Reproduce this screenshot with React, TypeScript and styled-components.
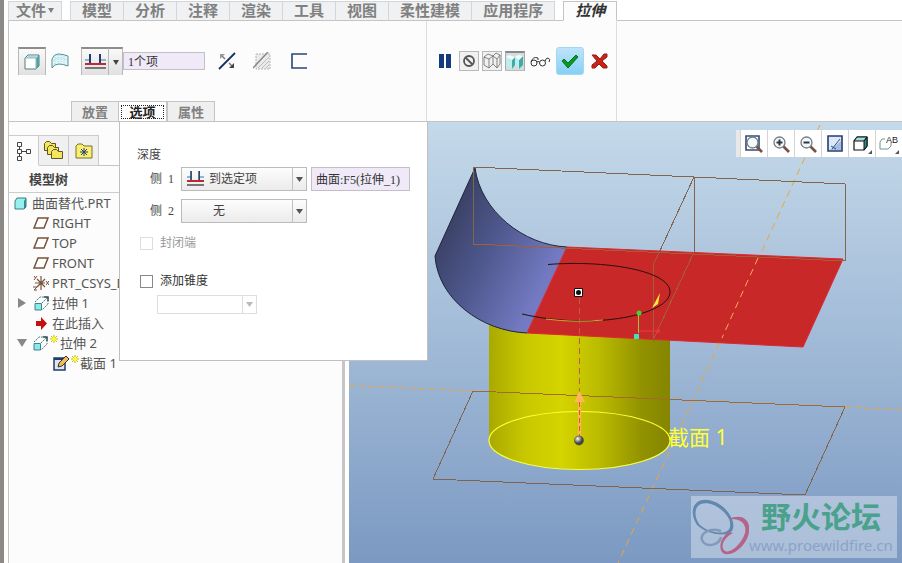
import React from "react";
import styled, { createGlobalStyle } from "styled-components";

const GlobalStyle = createGlobalStyle`
  *, *::before, *::after { box-sizing: border-box; }
  html, body { margin: 0; padding: 0; }
  body {
    background: #fff;
    color: #444;
    font: 12px/16px "Liberation Serif", "Noto Sans CJK SC", sans-serif;
  }
  button, input, select { font: inherit; color: inherit; margin: 0; }
  svg { display: block; flex: none; }
`;

const line = "#c4c4c4";
const uiFont = `"Noto Sans", "Noto Sans CJK SC", sans-serif`;

const Window = styled.div`
  display: flex;
  flex-direction: column;
  min-height: 100vh;
  padding-left: 4px;
  border-left: 4px solid #8d8986;
  overflow: hidden;
`;

const MenuBar = styled.nav`
  display: flex;
  height: 21px;
  padding-top: 1px;
`;

const MenuGap = styled.div`
  width: 8px;
  border-bottom: 1px solid ${line};
`;

const MenuFill = styled.div`
  flex: 1;
  border-bottom: 1px solid ${line};
`;

const MenuTab = styled.button<{ $active?: boolean; $first?: boolean }>`
  display: flex;
  align-items: center;
  justify-content: center;
  gap: 2px;
  padding: 0 11px 2px;
  border: 1px solid ${(p) => (p.$active ? line : "#d2d6da")};
  border-left-width: ${(p) => (p.$active || p.$first ? 1 : 0)}px;
  border-bottom-color: ${(p) => (p.$active ? "#fcfcfc" : line)};
  background: ${(p) => (p.$active ? "#fcfcfc" : "#f0f1f2")};
  color: ${(p) => (p.$active ? "#333" : "#808080")};
  font: ${(p) => (p.$active ? "italic" : "normal")} bold 15px/16px "Noto Sans CJK SC", sans-serif;
  white-space: nowrap;
`;

const FileTab = styled(MenuTab)`
  padding: 0 7px 2px;
`;

const Ribbon = styled.header`
  display: flex;
  height: 101px;
  background: #fcfcfc;
  border-left: 1px solid ${line};
  border-bottom: 1px solid ${line};
`;

const RibbonMain = styled.div`
  display: flex;
  flex-direction: column;
  justify-content: space-between;
  width: 418px;
  border-right: 1px solid #ddd;
`;

const RibbonActions = styled.div`
  width: 190px;
  padding: 26px 0 0 9px;
  border-right: 1px solid #ddd;
`;

const ToolRow = styled.div`
  display: flex;
  align-items: center;
  height: 28px;
`;

const MainTools = styled(ToolRow)`
  margin: 26px 0 0 9px;
`;

const IconButton = styled.button<{ $w?: number; $look?: "raised" | "ok" | "box" | "pressed" }>`
  display: flex;
  align-items: center;
  justify-content: center;
  flex: none;
  width: ${(p) => p.$w ?? 28}px;
  height: ${(p) => (p.$look === "box" || p.$look === "pressed" ? 20 : 28)}px;
  padding: 0;
  border: 0 solid #b8b8b8;
  background: transparent;
  ${(p) =>
    p.$look === "raised" &&
    `border-width: 2px 1px 0; border-top-color: #8c8c8c; background: linear-gradient(#fafafa, #e0e0e0);`}
  ${(p) =>
    p.$look === "ok" &&
    `border: 1px solid #a4d8ee; border-radius: 3px; background: linear-gradient(#bfe4fb, #86d0f6);`}
  ${(p) => p.$look === "box" && `border-width: 1px; background: #f1f1f1;`}
  ${(p) => p.$look === "pressed" && `border-width: 2px 1px 1px; border-color: #888 #aaa #bbb; background: #d6dcdc;`}
`;

const DropButton = styled(IconButton)`
  border-left: 0;
`;

const Spacer = styled.div<{ $w: number }>`
  flex: none;
  width: ${(p) => p.$w}px;
`;

const Field = styled.input`
  width: 82px;
  height: 18px;
  padding: 0 4px;
  border: 1px solid #c2bfc6;
  background: #f0eaf8;
  color: #333;
`;

const ReferenceField = styled(Field)`
  width: 99px;
  height: 24px;
  margin-left: 4px;
`;

const SubTabs = styled.div`
  display: flex;
  height: 20px;
  margin-left: 62px;
`;

const SubTab = styled.button<{ $active?: boolean }>`
  display: flex;
  align-items: center;
  justify-content: center;
  width: 48px;
  padding: 0 2px;
  border: 1px solid ${line};
  border-width: 1px 1px 0 ${(p) => (p.$active ? 0 : 1)}px;
  background: ${(p) => (p.$active ? "#fff" : "#efefef")};
  color: ${(p) => (p.$active ? "#222" : "#808080")};
  font: bold 13px/14px "Noto Sans CJK SC", sans-serif;
`;

const Focus = styled.span`
  flex: 1;
  outline: 1px dotted #222;
  outline-offset: -1px;
`;

const Workspace = styled.div`
  position: relative;
  display: flex;
  flex: 1;
`;

const Sidebar = styled.aside`
  display: flex;
  flex-direction: column;
  width: 337px;
  margin-right: 4px;
  padding-top: 13px;
  border-left: 1px solid ${line};
  border-right: 3px solid #c6c6c6;
  background: #fcfcfc;
`;

const PanelTabs = styled.div`
  display: flex;
  height: 31px;
`;

const PanelTab = styled.button<{ $active?: boolean }>`
  display: flex;
  align-items: center;
  justify-content: center;
  width: 30px;
  padding: 0;
  border: 1px solid #ccc;
  border-left: 0;
  border-bottom-color: ${(p) => (p.$active ? "#fcfcfc" : "#ccc")};
  background: ${(p) => (p.$active ? "#fcfcfc" : "#f0f0f0")};
`;

const TreeTitle = styled.h2`
  margin: 0;
  padding: 3px 20px 3px;
  border-bottom: 1px solid #ccc;
  font: bold 13px/20px ${uiFont};
`;

const Tree = styled.ul`
  margin: 0;
  padding: 0;
  list-style: none;
`;

const TreeRow = styled.li<{ $pad: number; $gap?: number }>`
  display: flex;
  align-items: center;
  gap: ${(p) => p.$gap ?? 3}px;
  height: 20px;
  padding-left: ${(p) => p.$pad}px;
  color: #555;
  font: 13px/20px ${uiFont};
  white-space: nowrap;
`;

const Expander = styled.button`
  display: flex;
  width: 14px;
  padding: 0;
  border: 0;
  background: none;
`;

const Marker = styled.span`
  align-self: flex-start;
  padding-top: 2px;
`;

const OptionsPanel = styled.section`
  position: absolute;
  z-index: 2;
  top: 0;
  left: 111px;
  width: 309px;
  padding: 25px 16px 46px 17px;
  border: 1px solid #c0c0c0;
  border-top: 0;
  background: #fff;
`;

const PanelHeading = styled.h3`
  margin: 0 0 4px;
  font: inherit;
`;

const SideRow = styled.div`
  display: flex;
  align-items: center;
  height: 24px;
  margin-bottom: 8px;
`;

const SideLabel = styled.label`
  width: 31px;
  margin-left: 13px;
  white-space: pre;
`;

const SelectBox = styled.div<{ $off?: boolean }>`
  display: flex;
  align-items: center;
  width: ${(p) => (p.$off ? 100 : 126)}px;
  height: ${(p) => (p.$off ? 19 : 24)}px;
  border: 1px solid ${(p) => (p.$off ? "#ddd" : "#bbb")};
  background: ${(p) => (p.$off ? "#fff" : "linear-gradient(#fdfdfd, #ebebeb)")};
`;

const TaperBox = styled(SelectBox)`
  margin-left: 20px;
`;

const SelectIcon = styled.span<{ $empty?: boolean }>`
  flex: none;
  width: ${(p) => (p.$empty ? 31 : 27)}px;
  padding-left: 5px;
`;

const Select = styled.select`
  flex: 1;
  min-width: 0;
  height: 100%;
  padding: 0;
  border: 0;
  appearance: none;
  background: transparent;
`;

const Arrow = styled.span<{ $off?: boolean }>`
  display: flex;
  align-items: center;
  justify-content: center;
  width: 14px;
  height: 100%;
  border-left: 1px solid ${(p) => (p.$off ? "#ddd" : "#c0c0c0")};
  color: ${(p) => (p.$off ? "#bbb" : "#555")};
  pointer-events: none;
`;

const Checks = styled.div`
  display: flex;
  flex-direction: column;
  gap: 22px;
  padding: 4px 0 6px 3px;
`;

const CheckLine = styled.label<{ $off?: boolean }>`
  display: flex;
  align-items: center;
  gap: 7px;
  height: 16px;
  color: ${(p) => (p.$off ? "#999" : "#333")};
`;

const Check = styled.input`
  width: 13px;
  height: 13px;
  border: 1px solid #888;
  appearance: none;
  background: #fff;
  &:checked { background: #567; }
  &:disabled { border-color: #ddd; }
`;

const Viewport = styled.main`
  position: relative;
  flex: 1;
  min-width: 0;
  min-height: 441px;
  background: linear-gradient(#c4d9e9, #a0b9d6 51%, #7b99c2);
`;

const Scene = styled.svg`
  width: 100%;
  height: auto;
`;

const ViewTools = styled.div`
  position: absolute;
  top: 8px;
  right: 0;
  display: flex;
  height: 27px;
  padding-left: 4px;
  background: #e8e8e8;
`;

const ViewTool = styled.button`
  display: flex;
  align-items: center;
  justify-content: center;
  width: 27px;
  padding: 0;
  border: 0;
  border-left: 1px solid #d4d4d4;
  background: #fff;
`;

const Watermark = styled.div`
  position: absolute;
  right: 5px;
  bottom: 5px;
  display: flex;
  width: 206px;
  height: 62px;
  background: rgba(220, 227, 240, 0.5);
`;

const WatermarkText = styled.div`
  display: flex;
  flex-direction: column;
  align-items: center;
  white-space: nowrap;
`;

const SiteName = styled.span`
  color: #4aa18c;
  font: bold 30px/38px "Noto Sans CJK SC", sans-serif;
`;

const Site = styled.a`
  color: #8ba2c8;
  font: 15px/22px "Noto Sans", sans-serif;
  text-decoration: none;
`;

const Caret = ({ size = 7 }: { size?: number }) => (
  <svg width={size} height="5" viewBox="0 0 8 5" preserveAspectRatio="none">
    <path d="M0 0H8L4 5Z" fill="currentColor" />
  </svg>
);

const SolidIcon = () => (
  <svg width="18" height="18" viewBox="0 0 18 18">
    <path d="M2 5 5 2H16V13L13 16H2Z" fill="#fff" stroke="#557d80" />
    <path d="M13 5 16 2V13L13 16Z" fill="#4fa3a3" />
    <path d="M3 5 5 3H15L13 5Z" fill="#a9dcdc" />
    <path d="M2 5H13V16" fill="none" stroke="#8fb9ba" />
  </svg>
);

const SurfaceIcon = () => (
  <svg width="18" height="18" viewBox="0 0 18 18">
    <path d="M1 16V7Q3 2 7 2Q12 2 17 4V14Q12 12 8 12Q3 12 1 16Z" fill="#e0f5f7" stroke="#578f94" />
    <path d="M4 5V12M7 3V11M10 3V11M13 4V12M2 9Q5 6 9 6Q12 6 16 8" stroke="#a3dadd" fill="none" strokeDasharray="1 1" />
  </svg>
);

const ToSelectedIcon = ({ width = 21 }: { width?: number }) => (
  <svg width={width} height="18" viewBox="0 0 21 18" preserveAspectRatio="none">
    <path d="M0 7H5M16 7H21" stroke="#8db8cb" strokeWidth="2" />
    <path d="M0 11H21" stroke="#bd2a34" strokeWidth="2" />
    <path d="M5 1V10M15 1V10" stroke="#233a6c" strokeWidth="2" />
    <path d="M0 15H21" stroke="#777" strokeWidth="2" />
  </svg>
);

const FlipIcon = () => (
  <svg width="18" height="18" viewBox="0 0 18 18">
    <path d="M1 17 17 1" stroke="#14305c" strokeWidth="1.8" />
    <path d="M3 3 7 7M11 11 15 15" stroke="#777" strokeWidth="1.5" />
    <path d="M2 2H7L2 7Z" fill="#999" />
    <path d="M16 16H11L16 11Z" fill="#444" />
  </svg>
);

const RemoveIcon = () => (
  <svg width="18" height="18" viewBox="0 0 18 18">
    <path d="M3 2H17V17H3Z" fill="#ebebeb" stroke="#b5b5b5" strokeDasharray="2 1" />
    <path d="M5 16 16 5M9 16 16 9M13 16 16 13" stroke="#bbb" />
    <path d="M0 16 15 0" stroke="#888" strokeWidth="1.5" />
  </svg>
);

const ThickenIcon = () => (
  <svg width="16" height="16" viewBox="0 0 16 16">
    <path d="M16 1H1V15H16" fill="none" stroke="#25467a" strokeWidth="1.6" />
  </svg>
);

const PauseIcon = () => (
  <svg width="13" height="14" viewBox="0 0 13 14">
    <path d="M0 0H5V14H0ZM7 0H12V14H7Z" fill="#163a7e" />
  </svg>
);

const NoneIcon = () => (
  <svg width="14" height="14" viewBox="0 0 14 14" fill="none" stroke="#555" strokeWidth="1.8">
    <circle cx="7" cy="7" r="5" />
    <path d="M3.5 3.5 10.5 10.5" />
  </svg>
);

const WirePreviewIcon = () => (
  <svg width="18" height="18" viewBox="0 0 18 18" fill="none" stroke="#777">
    <path d="M1 5 6 7V16L1 13ZM1 5 5 2 10 4 6 7M6 16 10 12V4M10 12 14 16V7L10 4M14 7 17 3V12L14 16M10 4 13 1 17 3" strokeWidth=".9" />
  </svg>
);

const SolidPreviewIcon = () => (
  <svg width="18" height="17" viewBox="0 0 18 17">
    <path d="M0 4 6 7V16L0 13ZM9 4 13 7V16L9 12Z" fill="#bdeeee" />
    <path d="M6 7 9 4V12L6 16ZM13 7 17 3V12L13 16Z" fill="#42a9a9" />
    <path d="M0 4 3 2 9 4 6 7ZM9 4 12 2 17 3 13 7Z" fill="#eaffff" />
  </svg>
);

const GlassesIcon = () => (
  <svg width="21" height="14" viewBox="0 0 21 14" fill="none" stroke="#333">
    <circle cx="4" cy="9" r="3" />
    <circle cx="12.500" cy="9" r="3" />
    <path d="M7 8Q8 7 9.500 8M1 8Q3 2 8 4V6M15 7Q16 4 18 4Q21 5 19 8" />
  </svg>
);

const OkIcon = () => (
  <svg width="18" height="16" viewBox="0 0 18 16">
    <path d="M1 8 3 6 7 10 15 2 17 4 7 15Z" fill="#0b9a21" stroke="#08701a" />
  </svg>
);

const CancelIcon = () => (
  <svg width="17" height="16" viewBox="0 0 17 16">
    <path d="M1 2H5L9 6 13 1H16V4L11 8 16 13V15H12L8 11 4 15H1V12L6 8Z" fill="#c92318" stroke="#9c1b18" />
  </svg>
);

const TreeIcon = () => (
  <svg width="15" height="20" viewBox="0 0 15 20" fill="none" stroke="#444">
    <path d="M1.500 1.500h4v4h-4ZM1.500 8.500h4v4h-4ZM1.500 15.500h4v4h-4ZM10.500 8.500h4v4h-4ZM3.500 5.500v3M3.500 12.500v3M5.500 10.500h5" />
  </svg>
);

const folder = "M0.500 2.500 2.500 0.500H5.500L7.500 2.500H11.500V9.500H0.500Z";

const FoldersIcon = () => (
  <svg width="20" height="19" viewBox="0 0 20 19" fill="#f4e45e" stroke="#5d5622">
    <path d={folder} />
    <path d={folder} transform="translate(3 4)" />
    <path d={folder} transform="translate(7 8)" />
  </svg>
);

const FavoritesIcon = () => (
  <svg width="18" height="16" viewBox="0 0 18 16">
    <path d="M1 3 3 1H7L9 3H17V15H1Z" fill="#faf06c" stroke="#776f30" />
    <path d="M9 5V13M5 9H13M6 6 12 12M12 6 6 12" stroke="#233b7c" />
  </svg>
);

const PartIcon = () => (
  <svg width="13" height="13" viewBox="0 0 13 13">
    <path d="M1 4 3 1H12V10L10 12H1Z" fill="#96f0f0" stroke="#387c83" />
    <path d="M10 4 12 1V10L10 12Z" fill="#328a8d" />
  </svg>
);

const PlaneIcon = () => (
  <svg width="16" height="12" viewBox="0 0 16 12">
    <path d="M5 1H15L11 11H1Z" fill="#fff" stroke="#76513c" strokeWidth="1.5" />
  </svg>
);

const CsysIcon = () => (
  <svg width="16" height="16" viewBox="0 0 16 16" fill="none" stroke="#79513c">
    <path d="M8 8V1M8 8V15M2 8H12M4 4 12 12M4 12 12 4" strokeWidth="1.2" />
    <path d="M1 1 2.500 3M4 1 1 5M13 6 16 10M16 6 13 10M0 12H4L1 15H4" />
  </svg>
);

const ExtrudeIcon = () => (
  <svg width="15" height="15" viewBox="0 0 15 15">
    <path d="M1 7.500H7.500V14H1Z" fill="#89eaea" stroke="#438289" />
    <path d="M1 6 6 1H14V8L8 14M8 7 14 1" fill="none" stroke="#477" strokeDasharray="2 1" />
    <path d="M10 1H14V5" fill="none" stroke="#355" strokeWidth="1.5" />
  </svg>
);

const InsertIcon = () => (
  <svg width="13" height="13" viewBox="0 0 13 13">
    <path d="M0 4H5V0L11 6.500 5 13V9H0Z" fill="#c41010" />
  </svg>
);

const SketchIcon = () => (
  <svg width="17" height="16" viewBox="0 0 17 16">
    <path d="M1 3H12V15H1Z" fill="#dce7f0" stroke="#203b6b" strokeWidth="1.5" />
    <path d="M1 3H12V5H1Z" fill="#203b6b" />
    <path d="M5 12 6 8 13 1 16 4 9 11Z" fill="#f0bd56" stroke="#3b3028" />
  </svg>
);

const NewMark = () => (
  <svg width="8" height="8" viewBox="0 0 8 8" stroke="#c4b800">
    <path d="M4 0V8M0 4H8M1 1 7 7M7 1 1 7" />
    <circle cx="4" cy="4" r="2" fill="#ffff20" stroke="none" />
  </svg>
);

const ZoomIcon = ({ sign, framed }: { sign?: string; framed?: boolean }) => (
  <svg width="18" height="18" viewBox="0 0 18 18">
    {framed && <path d="M1 1H14V15H1Z" fill="#fff" stroke="#304c7a" strokeWidth="1.6" />}
    <path d="M11 11 17 17" stroke="#775046" strokeWidth="2.6" />
    <circle cx="7.500" cy="7.500" r="5.500" fill="#f5f8f9" stroke="#747c82" strokeWidth="1.3" />
    {sign && <path d={sign} stroke="#26384d" strokeWidth="2" />}
  </svg>
);

const RepaintIcon = () => (
  <svg width="16" height="17" viewBox="0 0 16 17">
    <path d="M1 1H15V16H1Z" fill="#dce8f7" stroke="#243e70" strokeWidth="1.6" />
    <path d="M2 15 7 12 14 6V15Z" fill="#a3bce1" />
    <path d="M5 14 13 4M4 11 9 14" stroke="#31527e" />
  </svg>
);

const CubeIcon = () => (
  <svg width="20" height="20" viewBox="0 0 20 20">
    <path d="M2 7 5 3H15V12L12 16H2Z" fill="#fff" stroke="#111" strokeWidth="1.2" />
    <path d="M2 7 5 3H15L12 7Z" fill="#9bdedb" stroke="#111" />
    <path d="M12 7 15 3V12L12 16Z" fill="#298c8a" stroke="#111" />
    <path d="M20 16V20H16Z" fill="#555" />
  </svg>
);

const AnnotationIcon = () => (
  <svg width="20" height="20" viewBox="0 0 20 20">
    <path d="M6 5H3L1 8V15H9L12 12V9" fill="none" stroke="#6c9893" />
    <text x="7" y="9" fontFamily="Liberation Sans, sans-serif" fontSize="9" fill="#222">AB</text>
    <path d="M20 16V20H16Z" fill="#555" />
  </svg>
);

const WatermarkLogo = () => (
  <svg width="58" height="62" viewBox="0 0 58 62">
    <path
      fill="#6189ae"
      fillRule="evenodd"
      d="M6 29C0 20 0 9 8 5C19 0 36 10 41 23C44 31 42 37 36 38C25 40 12 35 6 29ZM8 28C15 35 27 38 34 36C40 34 40 28 38 23C32 12 19 5 10 8C3 11 3 20 8 28Z"
    />
    <path
      fill="#b56488"
      fillRule="evenodd"
      d="M38 23C50 17 60 23 58 36C56 49 43 60 34 58C26 55 29 41 38 36L42 37C34 41 28 50 34 55C40 58 51 47 54 37C56 28 50 22 38 23Z"
    />
    <path d="M30 35C18 31 9 38 11 44C14 52 28 50 30 41" fill="none" stroke="#8499ba" strokeWidth="2.500" />
  </svg>
);

const ModelScene = () => (
  <Scene viewBox="349 122 553 441" preserveAspectRatio="xMinYMin meet" role="img" aria-label="拉伸模型">
    <defs>
      <linearGradient id="cyl">
        <stop offset="0" stopColor="#a9a900" />
        <stop offset="0.2" stopColor="#c8c800" />
        <stop offset="0.4" stopColor="#d4d400" />
        <stop offset="0.6" stopColor="#bcbc00" />
        <stop offset="0.85" stopColor="#919100" />
        <stop offset="1" stopColor="#858500" />
      </linearGradient>
      <linearGradient id="sweep" gradientUnits="userSpaceOnUse" x1="440" y1="220" x2="548" y2="275">
        <stop offset="0" stopColor="#383e60" />
        <stop offset="0.45" stopColor="#4d578b" />
        <stop offset="1" stopColor="#737ac2" />
      </linearGradient>
      <radialGradient id="ball" cx="0.35" cy="0.3">
        <stop offset="0" stopColor="#fff" />
        <stop offset="1" stopColor="#444" />
      </radialGradient>
    </defs>
    <g fill="none" stroke="#eba63c">
      <path d="M349 385.500 473 391M845 407 902 410" strokeDasharray="6 4" />
      <path d="M820 125 618 563" strokeDasharray="7 5" />
    </g>
    <path d="M473 391 845 407 805 495 433 479Z" fill="none" stroke="#80644e" shapeRendering="crispEdges" />
    <path d="M489 325H670V440A90.500 29 0 0 1 489 440Z" fill="url(#cyl)" />
    <path d="M473 391 845 407" stroke="#a06a32" shapeRendering="crispEdges" />
    <ellipse cx="579.500" cy="440.500" rx="90.500" ry="29" fill="none" stroke="#ffff32" strokeWidth="1.2" />
    <path d="M475 168C481 211 523 245 567 247L527 333C481 331 438 299 435 256Z" fill="url(#sweep)" />
    <path d="M527 333C481 331 438 299 435 256L475 168C481 211 523 245 567 247" fill="none" stroke="#20233a" />
    <path d="M567 247 843 259 803 347 527 333Z" fill="#c82828" stroke="#dc2831" />
    <g fill="none" stroke="#826550" shapeRendering="crispEdges">
      <path d="M473 244V167L694 177 845 184V261" />
      <path d="M694 177 658 255M694 177V252" />
      <path d="M473 244 845 261M658 255 653 265V342M694 252 654 338" stroke="#a35f38" />
    </g>
    <path d="M548 264.500C603 260 670 270 670 292C670 314 596 331 522 314" fill="none" stroke="#26100c" />
    <path d="M546 319Q578 323 603 320" fill="none" stroke="#d8a735" />
    <path d="M758 258 722 338" stroke="#f6b04c" strokeDasharray="7 5" />
    <path d="M579.500 298V394" stroke="#c05a43" strokeDasharray="6 4" />
    <path d="M579.500 400V438" stroke="#ffb45a" strokeWidth="3" />
    <path d="M579.500 402V436" stroke="#d65a20" strokeDasharray="5 3" />
    <path d="M574 402 579.500 391 585 402Z" fill="#ffb45e" />
    <circle cx="579" cy="440.500" r="4.500" fill="url(#ball)" stroke="#444" strokeWidth=".6" />
    <path d="M574.500 288.500H582.500V296.500H574.500Z" fill="#fff" stroke="#111" />
    <circle cx="578.500" cy="292.500" r="2.500" fill="#111" />
    <path d="M660 293 652 308 658 304Z" fill="#ffeb3a" />
    <path d="M639 331H658" stroke="#ef3940" />
    <path d="M638.500 313V333" stroke="#a4be48" />
    <circle cx="639" cy="313" r="2.500" fill="#44d52c" />
    <circle cx="658" cy="331" r="2" fill="#ef3040" />
    <path d="M634 334H639V339H634Z" fill="#49dbc5" />
    <text x="668" y="445" fill="#ffff32" fontFamily="Noto Sans, Noto Sans CJK SC, sans-serif" fontSize="21">截面 1</text>
  </Scene>
);

const menus = ["模型", "分析", "注释", "渲染", "工具", "视图", "柔性建模", "应用程序"];

const viewTools = [
  { label: "重新调整", icon: <ZoomIcon framed /> },
  { label: "放大", icon: <ZoomIcon sign="M4.5 7.5H10.5M7.5 4.5V10.5" /> },
  { label: "缩小", icon: <ZoomIcon sign="M4.5 7.5H10.5" /> },
  { label: "重画", icon: <RepaintIcon /> },
  { label: "显示样式", icon: <CubeIcon /> },
  { label: "注释显示", icon: <AnnotationIcon /> },
];

const treeRows = [
  { text: "曲面替代.PRT", icon: <PartIcon />, pad: 5, gap: 5 },
  { text: "RIGHT", icon: <PlaneIcon />, pad: 24 },
  { text: "TOP", icon: <PlaneIcon />, pad: 24 },
  { text: "FRONT", icon: <PlaneIcon />, pad: 24 },
  { text: "PRT_CSYS_DEF", icon: <CsysIcon />, pad: 24 },
  { text: "拉伸 1", icon: <ExtrudeIcon />, pad: 8, expand: "M1 0 9 5 1 10Z" },
  { text: "在此插入", icon: <InsertIcon />, pad: 27 },
  { text: "拉伸 2", icon: <ExtrudeIcon />, pad: 8, gap: 2, expand: "M0 1H10L5 9Z", fresh: true },
  { text: "截面 1", icon: <SketchIcon />, pad: 44, gap: 1, fresh: true },
];

export default function App() {
  return (
    <>
      <GlobalStyle />
      <Window>
        <MenuBar>
          <FileTab $first>文件<Caret size={6} /></FileTab>
          <MenuGap />
          {menus.map((name, i) => (
            <MenuTab key={name} $first={i === 0}>{name}</MenuTab>
          ))}
          <MenuGap />
          <MenuTab $active>拉伸</MenuTab>
          <MenuFill />
        </MenuBar>

        <Ribbon>
          <RibbonMain>
            <MainTools>
              <IconButton $look="raised" aria-label="实体"><SolidIcon /></IconButton>
              <IconButton aria-label="曲面"><SurfaceIcon /></IconButton>
              <Spacer $w={7} />
              <IconButton $look="raised" aria-label="到选定项"><ToSelectedIcon /></IconButton>
              <DropButton $look="raised" $w={14} aria-label="深度选项"><Caret size={6} /></DropButton>
              <Field aria-label="深度参考" defaultValue="1个项" />
              <Spacer $w={8} />
              <IconButton aria-label="反向"><FlipIcon /></IconButton>
              <Spacer $w={7} />
              <IconButton aria-label="移除材料"><RemoveIcon /></IconButton>
              <Spacer $w={9} />
              <IconButton aria-label="加厚"><ThickenIcon /></IconButton>
            </MainTools>
            <SubTabs>
              <SubTab>放置</SubTab>
              <SubTab $active><Focus>选项</Focus></SubTab>
              <SubTab>属性</SubTab>
            </SubTabs>
          </RibbonMain>
          <RibbonActions>
            <ToolRow>
              <IconButton $w={18} aria-label="暂停"><PauseIcon /></IconButton>
              <Spacer $w={5} />
              <IconButton $w={20} $look="box" aria-label="无预览"><NoneIcon /></IconButton>
              <Spacer $w={3} />
              <IconButton $w={20} $look="box" aria-label="分离预览"><WirePreviewIcon /></IconButton>
              <Spacer $w={3} />
              <IconButton $w={20} $look="pressed" aria-label="连接预览"><SolidPreviewIcon /></IconButton>
              <Spacer $w={3} />
              <IconButton $w={25} aria-label="特征预览"><GlassesIcon /></IconButton>
              <Spacer $w={3} />
              <IconButton $look="ok" aria-label="确定"><OkIcon /></IconButton>
              <IconButton $w={30} aria-label="取消"><CancelIcon /></IconButton>
            </ToolRow>
          </RibbonActions>
        </Ribbon>

        <Workspace>
          <Sidebar>
            <PanelTabs>
              <PanelTab $active aria-label="模型树"><TreeIcon /></PanelTab>
              <PanelTab aria-label="文件夹"><FoldersIcon /></PanelTab>
              <PanelTab aria-label="收藏夹"><FavoritesIcon /></PanelTab>
              <MenuFill />
            </PanelTabs>
            <TreeTitle>模型树</TreeTitle>
            <Tree>
              {treeRows.map((row) => (
                <TreeRow key={row.text} $pad={row.pad} $gap={row.gap}>
                  {row.expand && (
                    <Expander aria-label={row.text}>
                      <svg width="10" height="10" viewBox="0 0 10 10"><path d={row.expand} fill="#888" /></svg>
                    </Expander>
                  )}
                  {row.icon}
                  {row.fresh && <Marker><NewMark /></Marker>}
                  <span>{row.text}</span>
                </TreeRow>
              ))}
            </Tree>
          </Sidebar>

          <OptionsPanel>
            <PanelHeading>深度</PanelHeading>
            <SideRow>
              <SideLabel htmlFor="side1">侧  1</SideLabel>
              <SelectBox>
                <SelectIcon><ToSelectedIcon width={17} /></SelectIcon>
                <Select id="side1"><option>到选定项</option></Select>
                <Arrow><Caret /></Arrow>
              </SelectBox>
              <ReferenceField aria-label="侧 1 参考" defaultValue="曲面:F5(拉伸_1)" />
            </SideRow>
            <SideRow>
              <SideLabel htmlFor="side2">侧  2</SideLabel>
              <SelectBox>
                <SelectIcon $empty />
                <Select id="side2"><option>无</option></Select>
                <Arrow><Caret /></Arrow>
              </SelectBox>
            </SideRow>
            <Checks>
              <CheckLine $off><Check type="checkbox" disabled />封闭端</CheckLine>
              <CheckLine><Check type="checkbox" />添加锥度</CheckLine>
            </Checks>
            <TaperBox $off>
              <Select aria-label="锥度" disabled />
              <Arrow $off><Caret /></Arrow>
            </TaperBox>
          </OptionsPanel>

          <Viewport>
            <ModelScene />
            <ViewTools>
              {viewTools.map((tool) => (
                <ViewTool key={tool.label} aria-label={tool.label}>{tool.icon}</ViewTool>
              ))}
            </ViewTools>
            <Watermark>
              <WatermarkLogo />
              <WatermarkText>
                <SiteName>野火论坛</SiteName>
                <Site href="#site">www.proewildfire.cn</Site>
              </WatermarkText>
            </Watermark>
          </Viewport>
        </Workspace>
      </Window>
    </>
  );
}
